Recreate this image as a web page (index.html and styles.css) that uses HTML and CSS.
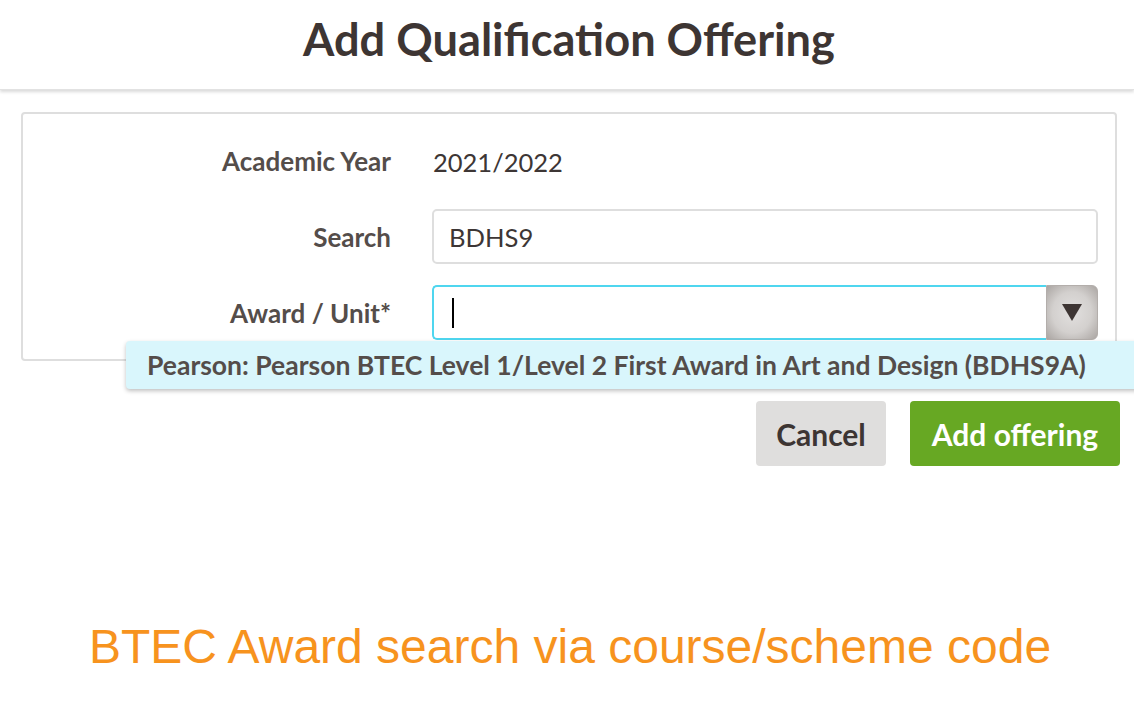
FILE: index.html
```html
<!DOCTYPE html>
<html lang="en">
<head>
<meta charset="utf-8">
<title>Add Qualification Offering</title>
<link rel="stylesheet" href="styles.css">
</head>
<body>
<header class="topbar">
  <h1 class="title">Add Qualification Offering</h1>
</header>
<main class="content">
  <section class="panel">
    <div class="row">
      <div class="label">Academic Year</div>
      <div class="value">2021/2022</div>
    </div>
    <div class="row">
      <div class="label">Search</div>
      <div class="input">BDHS9</div>
    </div>
    <div class="row">
      <div class="label">Award / Unit*</div>
      <div class="combo">
        <div class="combo-field"><span class="caret"></span></div>
        <div class="combo-btn"><span class="tri"></span></div>
        <div class="suggest">Pearson: Pearson BTEC Level 1/Level 2 First Award in Art and Design (BDHS9A)</div>
      </div>
    </div>
  </section>
  <div class="actions">
    <button class="btn btn-cancel" type="button">Cancel</button>
    <button class="btn btn-add" type="button">Add offering</button>
  </div>
  <p class="caption">BTEC Award search via course/scheme code</p>
</main>
</body>
</html>
```
FILE: styles.css
```css
* { box-sizing: border-box; }
html, body { margin: 0; padding: 0; background: #fff; }
body {
  font-family: Lato, "Open Sans", sans-serif;
  color: #3d3533;
  width: 1134px;
  height: 702px;
  overflow: hidden;
}
.topbar {
  height: 90px;
  display: flex;
  align-items: center;
  justify-content: center;
  padding-bottom: 12px;
  padding-left: 4px;
  box-shadow: 0 2px 3px rgba(0,0,0,0.15);
  border-bottom: 1px solid #e2e2e2;
  position: relative;
  z-index: 1;
}
.title {
  margin: 0;
  font-size: 45.2px;
  font-weight: 700;
  color: #3d3533;
}
.content {
  padding: 22px 17px 0 21px;
}
.panel {
  border: 2px solid #dedede;
  border-radius: 4px;
  padding: 19px 17px 19px 0;
  display: flex;
  flex-direction: column;
  gap: 21px;
}
.row {
  display: grid;
  grid-template-columns: 368px 1fr;
  column-gap: 41px;
  align-items: center;
  height: 55px;
}
.label {
  text-align: right;
  font-weight: 700;
  font-size: 26px;
  color: #544d4a;
}
.value {
  font-size: 25.5px;
  color: #3d3635;
  padding-left: 1px;
  padding-top: 3px;
}
.input {
  height: 55px;
  border: 2px solid #dedede;
  border-radius: 5px;
  font-size: 25.6px;
  color: #3d3635;
  display: flex;
  align-items: center;
  padding-left: 15px;
}
.combo {
  position: relative;
  height: 55px;
  display: flex;
}
.combo-field {
  flex: 1;
  border: 2px solid #4fd6ef;
  border-right: none;
  border-radius: 5px 0 0 5px;
  display: flex;
  align-items: center;
  padding-left: 18px;
}
.caret {
  width: 2px;
  height: 30px;
  background: #000;
}
.combo-btn {
  width: 52px;
  border-radius: 0 6px 6px 0;
  background: radial-gradient(ellipse at center, #e2e0df 0%, #d3d0ce 55%, #aaa5a2 100%);
  border: 1px solid #b3aeab;
  display: flex;
  align-items: center;
  justify-content: center;
}
.tri {
  width: 0;
  height: 0;
  border-left: 10px solid transparent;
  border-right: 10px solid transparent;
  border-top: 17px solid #3d3533;
}
.suggest {
  position: absolute;
  top: 56px;
  left: -306px;
  width: 1020px;
  height: 48px;
  background: #d9f6fc;
  border-radius: 4px;
  box-shadow: 0 2px 4px rgba(0,0,0,0.25);
  font-weight: 700;
  font-size: 26.5px;
  color: #544d4a;
  display: flex;
  align-items: center;
  padding-left: 21px;
  white-space: nowrap;
}
.actions {
  margin-top: 40px;
  display: flex;
  justify-content: flex-end;
  gap: 24px;
  margin-right: -3px;
}
.btn {
  height: 65px;
  border: none;
  border-radius: 4px;
  font-family: inherit;
  font-weight: 700;
  font-size: 30px;
  cursor: pointer;
}
.btn-cancel {
  width: 130px;
  background: #dfdedd;
  color: #3d3533;
}
.btn-add {
  width: 210px;
  background: #67a823;
  color: #fff;
}
.caption {
  margin: 153px 0 0 -18px;
  width: 1134px;
  text-align: center;
  font-family: "Liberation Sans", Arial, sans-serif;
  font-size: 48px;
  color: #f7931e;
}
```
